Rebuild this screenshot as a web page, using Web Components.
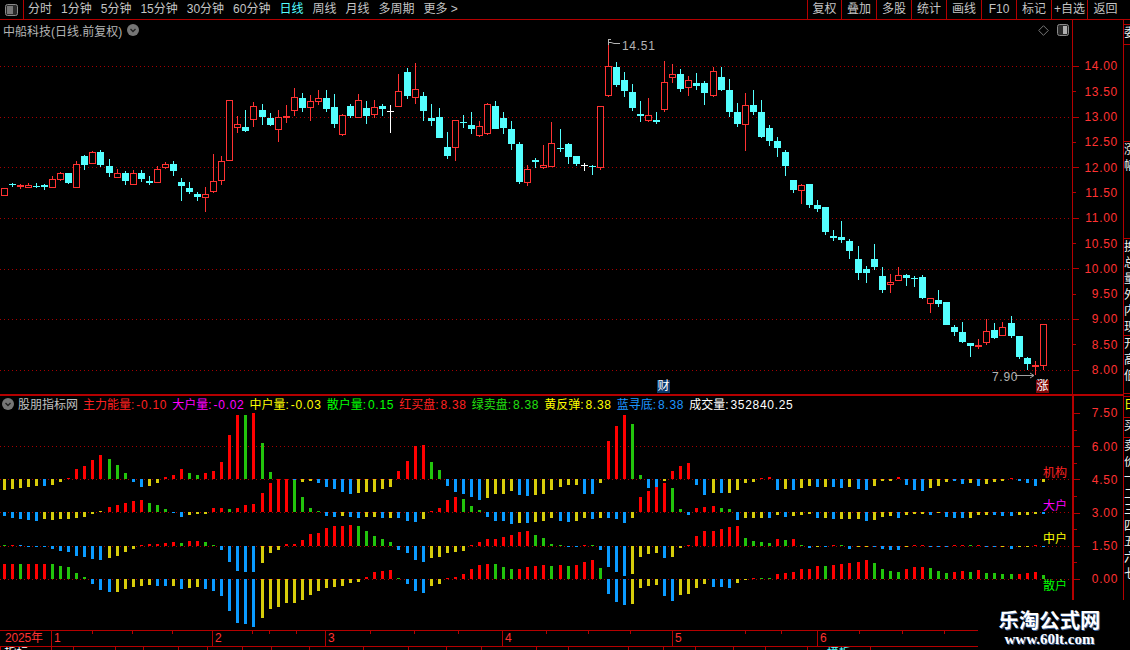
<!DOCTYPE html>
<html lang="zh">
<head>
<meta charset="UTF-8">
<title>中船科技</title>
<style>
  html, body { margin: 0; background: #000; }
  body { font: 12px "Liberation Sans", "Noto Sans CJK SC", sans-serif; color: #c4c4c4; }
</style>
</head>
<body>

<stock-app>
  <tool-bar>
    <bar-btn slot="left">分时</bar-btn>
    <bar-btn slot="left">1分钟</bar-btn>
    <bar-btn slot="left">5分钟</bar-btn>
    <bar-btn slot="left">15分钟</bar-btn>
    <bar-btn slot="left">30分钟</bar-btn>
    <bar-btn slot="left">60分钟</bar-btn>
    <bar-btn slot="left" active>日线</bar-btn>
    <bar-btn slot="left">周线</bar-btn>
    <bar-btn slot="left">月线</bar-btn>
    <bar-btn slot="left">多周期</bar-btn>
    <bar-btn slot="left">更多 &gt;</bar-btn>
    <bar-btn slot="right" boxed style="width:34px">复权</bar-btn>
    <bar-btn slot="right" boxed style="width:35px">叠加</bar-btn>
    <bar-btn slot="right" boxed style="width:35px">多股</bar-btn>
    <bar-btn slot="right" boxed style="width:35px">统计</bar-btn>
    <bar-btn slot="right" boxed style="width:35px">画线</bar-btn>
    <bar-btn slot="right" boxed style="width:35px">F10</bar-btn>
    <bar-btn slot="right" boxed style="width:35px">标记</bar-btn>
    <bar-btn slot="right" boxed style="width:36px">+自选</bar-btn>
    <bar-btn slot="right" boxed style="width:36px">返回</bar-btn>
  </tool-bar>
  <price-pane></price-pane>
  <indicator-pane></indicator-pane>
  <time-axis></time-axis>
  <tab-strip></tab-strip>
  <side-panel slot="side"></side-panel>
  <water-mark slot="over"></water-mark>
</stock-app>

<script>
const RED = '#ff3232', CYAN = '#54ffff', LINE = '#b40000', DOT = '#a50000';
const BAR = { r: '#ff0000', g: '#22c40c', b: '#0a9bff', y: '#d6cc0a' };
const FONT = '"Liberation Sans", "Noto Sans CJK SC", sans-serif';

// 첫 봉 중심 4.3, 봉 간격 8.054
const cx = i => Math.floor(4.3 + 8.054 * i);

// [고가, 몸통위, 몸통아래, 저가, 색] - 확대 캡처 좌표(3배) 그대로
// 좌표를 y = base + v / 3 으로 변환
const K1 = `r 385 385 407 407,c 368 373 376 380,r 372 376 380 386,r 369 376 383 383,c 369 378 381 384,
c 372 376 380 390,r 348 358 383 383,r 336 340 359 363,c 339 339 369 372,r 303 313 383 383,
c 285 288 315 330,r 272 277 311 311,c 270 276 315 321,c 297 318 339 351,r 327 340 353 353,
c 333 339 363 375,r 330 340 374 374,c 330 339 357 366,c 348 363 369 375,r 318 328 368 368,
r 306 313 323 327,c 303 312 333 348,c 354 366 378 423,c 366 384 396 402,c 396 402 411 423,
r 381 403 413 456,r 282 364 395 399,r 289 304 362 375,r 121 121 302 302,r 168 193 203 219,
c 150 201 213 216,r 126 139 179 201,c 132 150 171 195,c 159 174 195 198,r 150 172 209 246,
r 135 168 173 189,r 84 112 152 168`;
const K2 = `c 189 204 234 246,r 195 214 233 273,r 180 205 215 225,c 180 204 237 246,c 192 231 282 294,
r 252 256 315 318,c 222 228 258 264,r 192 210 264 264,c 213 234 258 282,r 210 232 254 264,
c 222 228 237 258,w 225 243 245 309,r 132 184 231 231,c 114 126 198 207,r 99 178 203 222,
c 186 198 243 273,c 222 264 273 288,c 234 261 324 324,c 306 351 378 387,r 271 271 353 393,
c 255 276 279 294,c 246 285 297 312,r 273 289 317 321,r 219 223 311 315,c 213 228 297 297,
c 246 264 294 312,c 273 297 342 360,c 336 342 456 462,r 405 418 458 468,c 384 390 396 414,
r 345 406 413 417,r 276 340 410 412,c 297 354 357 366,c 339 342 381 402,c 378 378 402 408,
w 399 406 408 423,c 405 408 411 435,r 229 229 413 419,r 40 109 197 200,c 96 111 165 171,
c 126 150 183 201,c 162 186 234 243,c 213 252 258 276,r 204 256 273 276,c 246 270 276 282,
r 93 157 240 246,r 102 133 143 159,c 117 132 177 186,r 138 151 173 198,c 129 159 168 180,
c 153 159 189 225,r 111 124 197 201,c 111 141 180 183,c 147 180 246 261,c 219 246 282 291,
r 189 226 284 363,c 180 225 246 255,c 210 246 321 324,c 285 294 333 348,c 321 333 354 381,
c 360 366 408 438`;
const K3 = `c 0 0 30 38,r 12 15 32 72,c 12 12 75 84,c 60 75 87 96,c 81 81 156 165,c 150 168 174 183,
c 123 171 180 189,c 177 183 213 237,c 198 237 279 300,c 258 267 279 309,c 192 237 261 270,
c 261 288 330 339,r 282 306 314 339,r 261 286 302 302,c 282 285 294 318,c 288 294 296 321,
c 285 291 354 357,r 355 355 371 399,c 330 360 372 381,c 366 366 435 435,c 435 441 456 468,
c 426 456 486 489,c 489 489 498 531,r 477 495 501 507,r 418 454 488 495,c 429 450 474 477,
r 426 442 467 467,c 408 429 468 474,c 468 468 531 537,c 531 534 552 570,r 543 555 561 585,
r 433 433 557 570`;

function parseK(text, base) {
  return text.split(',').map(s => {
    const p = s.trim().split(/\s+/);
    return { c: p[0], v: p.slice(1).map(n => Math.round(base + Number(n) / 3)) };
  });
}
// K3 앞 두 묶음은 K2 끝과 겹치는 구간이라 98번부터 다시 이어붙임
const candles = [...parseK(K1, 60), ...parseK(K2, 30), ...parseK(K3, 180)];

const ROWS = [
  [479, `y-32 y-29 y-26 y-24 y-21 b-21 y-18 y-9 r1 r30
    r38 r57 r72 g60 g42 g18 b-9 b-24 y-21 y-12
    r6 r12 r30 g18 g12 r18 r24 r51 r132 r192
    g192 r198 g108 g21 b-3 b-3 b-1 y-9 y-6 b-12
    b-24 b-30 b-39 b-45 y-42 y-39 y-39 y-30 y-24 r24
    r55 r99 r102 g52 g28 b-20 b-38 b-45 b-53 b-62
    y-56 y-44 y-44 y-35 b-47 b-50 y-47 y-45 y-33 y-23
    y-17 y-17 b-44 b-44 y-11 r115 r160 r193 g166 g13
    b-26 b-27 y-5 r25 r40 r49 b-17 b-47 y-41 b-41
    y-41 y-32 y-11 y-8 r1 r6 b-32 y-29 b-32 y-26
    y-21 b-24 y-24 b-24 b-26 y-24 b-30 b-32 y-20 y-6
    y-6 r6 b-18 b-32 b-35 y-26 y-20 y-8 b-6 b-14
    y-11 b-20 y-14 y-8 y-6 r3 b-6 b-11 b-20 y-9`],
  [512, `b-12 b-18 b-21 b-24 b-27 y-21 y-24 y-21 y-21 y-18
    y-15 y-6 y1 r15 r21 r27 r33 r36 g27 g21
    g8 b-4 b-14 y-8 y-5 y-5 r12 r12 g9 r12
    r21 r24 r58 r88 r98 r98 g96 g46 g13 g3
    b-12 b-14 y-12 b-14 b-18 y-15 y-15 b-18 y-18 b-18
    b-26 b-29 y-20 r1 r13 r35 r46 g40 g19 g7
    b-14 b-26 b-26 b-35 y-32 b-32 y-29 y-26 y-17 b-26
    b-29 y-26 y-17 b-20 y-17 b-17 b-20 b-32 y-17 r44
    r62 r74 r86 g71 g8 b-8 r11 r15 r17 g11
    g8 b-23 y-17 y-17 y-17 b-17 y-8 b-14 y-11 y-8
    y-5 b-18 y-18 b-20 y-20 y-20 y-20 b-26 y-23 y-15
    y-12 b-17 y-9 y-6 y-5 b-8 y-4 b-14 b-17 b-17
    y-17 y-9 y-8 b-8 b-11 b-11 y-8 y-8 y-5 b-6`],
  [546, `g1 r1 b1 b-1 b-3 b-3 b-8 b-14 b-18 b-30
    b-33 b-38 b-41 y-35 y-29 y-18 y-9 r3 r6 r6
    r9 r12 g9 r15 r15 g12 g3 b-12 b-48 b-74
    b-78 b-77 y-50 y-21 y-12 r6 r6 r18 r36 r39
    r54 r60 r60 r63 g60 g45 g30 g21 g12 b-11
    b-20 b-41 b-47 y-35 y-32 y-20 y-17 y-14 r1 r12
    r21 r21 r27 r33 r42 r45 g33 g24 g6 g3
    b-2 b-3 r3 g3 b-11 b-62 b-77 b-89 y-83 y-32
    y-23 y-20 b-35 y-32 y-5 r3 r30 r45 r45 r51
    r57 r60 g24 g15 g12 g9 r21 g18 r21 g3
    b-7 y-1 b-2 r2 g2 b-8 y-4 y-4 b-3 b-8
    b-11 b-11 y-4 r3 r2 b-1 b-1 b-1 r2 r2
    g2 r2 b-1 b-1 y-1 b-8 y-4 y-4 r2 b-1`],
  [579, `r44 r44 g44 r44 r44 r44 g44 g38 g35 g17
    g7 b-14 b-32 b-38 y-38 y-29 y-23 y-20 y-17 b-20
    b-20 y-20 b-29 y-26 y-23 b-29 b-35 b-50 b-95 b-131
    b-134 b-143 y-116 y-89 y-83 y-71 y-71 y-62 y-47 y-35
    y-26 y-23 y-20 y-11 y-8 r7 r20 r23 r26 g1
    b-14 b-35 b-41 y-20 y-14 r3 r6 r15 r30 r42
    r46 g46 g37 g31 r30 r37 r40 r43 g40 r43
    g40 r42 r51 r57 g33 b-44 b-68 b-77 y-74 y-26
    y-20 y-17 b-50 b-65 y-47 y-44 y-26 y-14 b-23 b-23
    b-26 y-11 y-1 r3 g4 g1 r15 r19 r22 r30
    r30 r39 g39 r41 r44 r48 r51 r57 g48 g30
    g24 g20 r30 r36 r36 g33 g24 g18 r20 r24
    g21 r27 g18 g18 g15 g14 r14 r18 r21 g12`]
];

const dotted = y => `<line x1="0" x2="1072" y1="${y + .5}" y2="${y + .5}" stroke="${DOT}" stroke-dasharray="1 3"/>`;

function candleSvg() {
  let s = '';
  candles.forEach((k, i) => {
    const x = cx(i), [hi, top, bot, lo] = k.v;
    const col = k.c === 'r' ? RED : k.c === 'c' ? CYAN : '#fff';
    s += `<rect x="${x}" y="${hi}" width="1" height="${Math.max(lo - hi, 1)}" fill="${col}"/>`;
    const h = Math.max(bot - top, 1);
    if (k.c === 'r' && h > 2) {
      s += `<rect x="${x - 2.5}" y="${top + .5}" width="6" height="${h - 1}" fill="#000" stroke="${col}"/>`;
    } else {
      s += `<rect x="${x - 3}" y="${top}" width="7" height="${h}" fill="${col}"/>`;
    }
  });
  return s;
}

function barSvg() {
  let s = '';
  ROWS.forEach(([base, text]) => {
    text.trim().split(/\s+/).forEach((tok, i) => {
      const col = BAR[tok[0]], v = Number(tok.slice(1));
      const h = Math.max(Math.round(Math.abs(v) / 3), 1);
      const y = v > 0 ? base - h : base;
      s += `<rect x="${cx(i) - 1}" y="${y}" width="3" height="${h}" fill="${col}"/>`;
    });
  });
  return s;
}

const chevron = `<svg width="12" height="12" viewBox="0 0 12 12"><circle cx="6" cy="6" r="6" fill="#767676"/><path d="M3.5 5 6 7.5 8.5 5" fill="none" stroke="#222" stroke-width="1.4"/></svg>`;

class StockApp extends HTMLElement {
  constructor() {
    super();
    this.attachShadow({ mode: 'open' }).innerHTML = `
      <style>
        :host { display: grid; position: relative; width: 1130px; height: 650px; overflow: hidden;
          background: #000; grid-template-columns: 1123px 7px; grid-template-rows: 20px 630px; }
        .top { grid-column: 1 / 3; }
        .main { display: flex; flex-direction: column; border-right: 1px solid ${LINE}; width: 1123px; }
      </style>
      <div class="top"><slot name="top"></slot></div>
      <div class="main"><slot></slot></div>
      <slot name="side"></slot>
      <slot name="over"></slot>`;
  }
  connectedCallback() {
    this.querySelector('tool-bar').slot = 'top';
  }
}

class ToolBar extends HTMLElement {
  constructor() {
    super();
    this.attachShadow({ mode: 'open' }).innerHTML = `
      <style>
        :host { display: flex; box-sizing: border-box; height: 20px; width: 1130px; border-bottom: 1px solid ${LINE}; }
        .icon { width: 23px; border-right: 1px solid ${LINE}; display: flex; align-items: center; justify-content: center; }
        .left { display: flex; gap: 9px; padding-left: 4px; flex: 1; }
        .right { display: flex; margin-right: 7px; }
      </style>
      <div class="icon"><svg width="13" height="12" viewBox="0 0 13 12"><rect x=".5" y=".5" width="12" height="11" rx="2" fill="#2a2a2a" stroke="#8a8a8a"/><rect x="2" y="2" width="6" height="8" fill="#777"/></svg></div>
      <div class="left"><slot name="left"></slot></div>
      <div class="right"><slot name="right"></slot></div>`;
  }
}

class BarBtn extends HTMLElement {
  constructor() {
    super();
    this.attachShadow({ mode: 'open' }).innerHTML = `
      <style>
        :host { display: block; line-height: 19px; height: 19px; white-space: nowrap; font: 12px/19px ${FONT}; color: #c4c4c4; }
        :host([active]) { color: ${CYAN}; }
        :host([boxed]) { box-sizing: border-box; border-left: 1px solid ${LINE}; text-align: center; }
      </style><slot></slot>`;
  }
}

class ScaleAxis extends HTMLElement {
  constructor() {
    super();
    this.attachShadow({ mode: 'open' });
  }
  connectedCallback() {
    const step = Number(this.getAttribute('step'));
    const first = Number(this.getAttribute('first'));
    const labels = this.getAttribute('labels').split(',');
    const major = Number(this.getAttribute('major') || 2);
    const rows = labels.map((t, i) => `<div class="row"><i class="${i % major === 0 ? 'big' : ''}"></i><b>${t}</b></div>`).join('');
    this.shadowRoot.innerHTML = `
      <style>
        :host { display: block; box-sizing: border-box; width: 51px; border-left: var(--axis-line, 1px) solid ${LINE};
          padding-top: ${first - step / 2}px; overflow: hidden; }
        .row { display: flex; height: ${step}px; align-items: center; }
        i { width: 3px; height: 1px; background: ${LINE}; }
        i.big { width: 6px; }
        b { margin-left: auto; margin-right: 5px; font: 12px ${FONT}; letter-spacing: .7px; color: ${RED}; }
      </style>${rows}`;
  }
}

class PricePane extends HTMLElement {
  constructor() {
    super();
    this.attachShadow({ mode: 'open' }).innerHTML = `
      <style>
        :host { display: grid; position: relative; box-sizing: border-box; height: 376px; grid-template-columns: 1072px 51px;
          border-bottom: 2px solid ${LINE}; font: 12px ${FONT}; }
        svg.plot { position: absolute; left: 0; top: 0; }
        .head { position: relative; display: flex; align-items: center; gap: 5px; padding: 2px 0 0 3px; height: 16px; color: #b4b4b4; }
        .tools { position: absolute; right: 3px; top: 4px; display: flex; gap: 8px; align-items: center; }
        .tag { position: absolute; color: #b4b4b4; letter-spacing: .7px; line-height: 14px; }
        .badge { position: absolute; width: 13px; height: 13px; font-size: 12px; line-height: 13px; text-align: center; color: #fff; }
      </style>
      <div class="area">
        <svg class="plot" width="1072" height="374" viewBox="0 20 1072 374" shape-rendering="crispEdges">
          ${[66, 117, 167, 218, 269, 319, 370].map(dotted).join('')}
          ${candleSvg()}
          <path shape-rendering="auto" d="M608.5 39V45M608.5 39.5H611M608.5 42.5H611L614 43.5H620" fill="none" stroke="#b4b4b4"/>
          <path shape-rendering="auto" d="M1015 375.5H1034M1030 373L1034 375.5L1030 378" fill="none" stroke="#a0a0a0"/>
        </svg>
        <div class="head">中船科技(日线.前复权) ${chevron}
          <div class="tools">
            <svg width="11" height="11" viewBox="0 0 11 11"><path d="M5.5 .7 10.3 5.5 5.5 10.3 .7 5.5Z" fill="none" stroke="#777"/></svg>
            <svg width="12" height="12" viewBox="0 0 12 12"><rect x=".5" y=".5" width="11" height="11" rx="2" fill="#2a2a2a" stroke="#8a8a8a"/><rect x="6" y="2" width="4" height="8" fill="#b0b0b0"/></svg>
          </div>
        </div>
        <span class="tag" style="left:622px;top:19px">14.51</span>
        <span class="tag" style="left:992px;top:350px">7.90</span>
        <span class="badge" style="left:657px;top:360px;background:#0b3a6e">财</span>
        <span class="badge" style="left:1036px;top:360px;background:#7d0606">涨</span>
      </div>
      <scale-axis first="46.5" step="25.3" labels="14.00,13.50,13.00,12.50,12.00,11.50,11.00,10.50,10.00,9.50,9.00,8.50,8.00"></scale-axis>`;
  }
}

class IndicatorPane extends HTMLElement {
  constructor() {
    super();
    const items = [
      ['主力能量', '-0.10', '#ff2020'], ['大户量', '-0.02', '#ff00ff'], ['中户量', '-0.03', '#ffff00'],
      ['散户量', '0.15', '#00ff00'], ['红买盘', '8.38', '#ff2020'], ['绿卖盘', '8.38', '#22e010'],
      ['黄反弹', '8.38', '#ffff00'], ['蓝寻底', '8.38', '#1e96ff'], ['成交量', '352840.25', '#ffffff']
    ];
    const legend = items.map(([a, b, c]) => `<span style="color:${c}">${a}:<em>${b}</em></span>`).join('');
    this.attachShadow({ mode: 'open' }).innerHTML = `
      <style>
        :host { display: grid; position: relative; height: 234px; grid-template-columns: 1072px 51px; --axis-line: 2px; font: 12px ${FONT}; }
        svg.plot { position: absolute; left: 0; top: 0; }
        .legend { position: relative; display: flex; align-items: center; height: 15px; gap: 5px; padding-left: 2px; white-space: nowrap; }
        .legend em { font-style: normal; letter-spacing: .7px; margin-left: 2px; }
        .name { color: #c0c0c0; margin-left: -1px; }
        .end { position: absolute; left: 1043px; line-height: 14px; }
      </style>
      <div class="area">
        <svg class="plot" width="1072" height="234" viewBox="0 396 1072 234" shape-rendering="crispEdges">
          ${[446, 479, 512, 546, 579].map(dotted).join('')}
          ${barSvg()}
        </svg>
        <div class="legend">${chevron}<span class="name">股朋指标网</span>${legend}</div>
        <span class="end" style="top:70px;color:#ff2020">机构</span>
        <span class="end" style="top:103px;color:#ff00ff">大户</span>
        <span class="end" style="top:136px;color:#ffff00">中户</span>
        <span class="end" style="top:183px;color:#00ff00">散户</span>
      </div>
      <scale-axis first="17.5" step="16.6" labels="7.50,,6.00,,4.50,,3.00,,1.50,,0.00"></scale-axis>`;
  }
}

class TimeAxis extends HTMLElement {
  constructor() {
    super();
    const ticks = [92, 132, 172, 252, 269, 296, 370, 414, 458, 546, 588, 630, 745, 781, 859, 902, 944];
    const tickSvg = ticks.map(x => `<rect x="${x}" y="0" width="1" height="3" fill="${LINE}"/>`).join('');
    this.attachShadow({ mode: 'open' }).innerHTML = `
      <style>
        :host { display: grid; position: relative; box-sizing: border-box; width: 978px; height: 17px;
          border-top: 1px solid ${LINE}; border-bottom: 1px solid ${LINE};
          grid-template-columns: 51px 161px 113px 177px 170px 145px 1fr; font: 12px/15px ${FONT}; color: ${RED}; }
        svg { position: absolute; left: 0; top: 0; }
        span { padding-left: 2px; border-left: 1px solid ${LINE}; }
        span:first-of-type { border: 0; padding-left: 5px; letter-spacing: -.2px; }
      </style>
      <svg width="978" height="3" shape-rendering="crispEdges">${tickSvg}</svg>
      <span>2025年</span><span>1</span><span>2</span><span>3</span><span>4</span><span>5</span><span>6</span>`;
  }
}

class TabStrip extends HTMLElement {
  constructor() {
    super();
    const edges = [0, 51, 73, 115, 143, 178, 207, 242, 271, 309, 363, 408, 446, 481, 536, 568, 628, 663, 695, 733, 765, 807, 870, 978];
    const texts = { 0: '&nbsp;指标', 1: '一', 20: '&nbsp;&nbsp;', 21: '&nbsp;一&nbsp;<u>模板</u>' };
    const cells = edges.slice(0, -1).map((x, i) =>
      `<div style="width:${edges[i + 1] - x}px">${texts[i] || ''}</div>`).join('');
    this.attachShadow({ mode: 'open' }).innerHTML = `
      <style>
        :host { display: flex; width: 978px; height: 3px; overflow: hidden; font: 12px/12px ${FONT}; color: #fff; }
        div { box-sizing: border-box; border-left: 1px solid ${LINE}; white-space: nowrap; overflow: hidden; }
        u { color: ${CYAN}; text-decoration: none; }
      </style>${cells}`;
  }
}

class SidePanel extends HTMLElement {
  constructor() {
    super();
    const sect = (h, rows, color) => `<div class="s" style="height:${h}px;color:${color || '#eee'}">${rows.map(t => `<p>${t}</p>`).join('')}</div>`;
    this.attachShadow({ mode: 'open' }).innerHTML = `
      <style>
        :host { display: flex; flex-direction: column; width: 7px; overflow: hidden; font: 12px/16px ${FONT}; }
        .s { box-sizing: border-box; border-bottom: 1px solid ${LINE}; padding-left: 1px; overflow: hidden; white-space: nowrap; }
        p { margin: 0; }
      </style>
      ${sect(5, [])}
      ${sect(20, ['委比'])}
      ${sect(97, [])}
      ${sect(97, ['', '', '', '', '涨', '幅'])}
      ${sect(97, ['换', '总', '量', '外', '内', '现'])}
      ${sect(58, ['开', '高', '低'])}
      ${sect(3, [])}
      ${sect(21, ['日'], '#ffff00')}
      ${sect(20, ['买'])}
      ${sect(212, ['卖', '价', '一', '二', '三', '四', '五', '六', '七'])}`;
  }
}

class WaterMark extends HTMLElement {
  constructor() {
    super();
    this.attachShadow({ mode: 'open' }).innerHTML = `
      <style>
        :host { position: absolute; left: 978px; top: 600px; width: 152px; height: 50px; background: #000; box-sizing: border-box;
          display: flex; flex-direction: column; align-items: center; padding: 7px 9px 0 0; color: #fff; }
        .cn { font: bold 20.4px/24px "Noto Sans CJK SC", sans-serif; text-shadow: 1px 1px 0 #3b5f96; }
        .en { font: bold 15px/16px "Liberation Serif", serif; text-shadow: 1px 1px 0 #3b5f96; }
      </style>
      <div class="cn">乐淘公式网</div><div class="en">www.60lt.com</div>`;
  }
}

customElements.define('bar-btn', BarBtn);
customElements.define('tool-bar', ToolBar);
customElements.define('scale-axis', ScaleAxis);
customElements.define('price-pane', PricePane);
customElements.define('indicator-pane', IndicatorPane);
customElements.define('time-axis', TimeAxis);
customElements.define('tab-strip', TabStrip);
customElements.define('side-panel', SidePanel);
customElements.define('water-mark', WaterMark);
customElements.define('stock-app', StockApp);
</script>
</body>
</html>
